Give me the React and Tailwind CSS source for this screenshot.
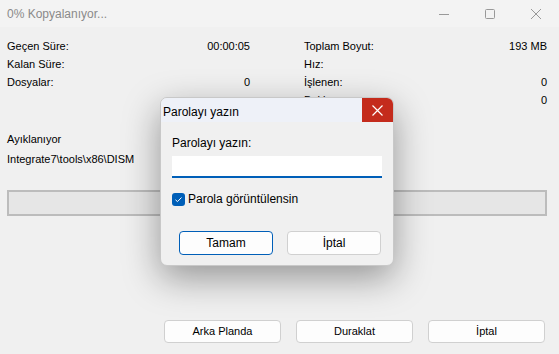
import React from 'react';

const font = { fontFamily: '"Liberation Sans", Arial, sans-serif' };

const Row = ({ label, value }) => (
  <div className="flex justify-between h-[18px] items-center">
    <span>{label}</span>
    <span>{value}</span>
  </div>
);

const WinButton = ({ children, primary }) => (
  <button
    className={
      'h-[24px] rounded-[4px] bg-[#fdfdfd] text-[12px] text-black ' +
      (primary ? 'w-[94px] border border-[#005fb8]' : 'w-[94px] border border-[#d0d0d0]')
    }
  >
    {children}
  </button>
);

const PasswordDialog = () => (
  <div className="absolute left-[160px] top-[97px] w-[234px] h-[169px] rounded-[7px] overflow-hidden bg-[#f0f0f0] border border-[#c8c8c8] shadow-[0_12px_36px_rgba(0,0,0,0.38)] text-[12px]">
    <div className="flex h-[24px] bg-[#eef1f8]">
      <span className="flex-1 pl-[2px] pt-[5px] text-black">Parolayı yazın</span>
      <div className="w-[31px] bg-[#c42b1c] flex items-center justify-center">
        <svg width="11" height="11" viewBox="0 0 11 11" stroke="white" strokeWidth="1.2">
          <path d="M0.5 0.5 L10.5 10.5 M10.5 0.5 L0.5 10.5" />
        </svg>
      </div>
    </div>
    <div className="px-[11px] pt-[14px]">
      <div className="leading-[14px]">Parolayı yazın:</div>
      <div className="mt-[6px] h-[22px] w-[210px] bg-white border-b-2 border-[#005fb8]" />
      <label className="mt-[12px] flex items-center gap-[3px]">
        <span className="w-[13px] h-[13px] rounded-[3px] bg-[#005fb8] flex items-center justify-center">
          <svg width="9" height="9" viewBox="0 0 9 9" fill="none" stroke="white" strokeWidth="1">
            <path d="M1.5 4.8 L3.5 6.6 L7.5 2.5" />
          </svg>
        </span>
        Parola görüntülensin
      </label>
      <div className="mt-[23px] flex gap-[14px] pl-[7px]">
        <WinButton primary>Tamam</WinButton>
        <WinButton>İptal</WinButton>
      </div>
    </div>
  </div>
);

export default function App() {
  return (
    <div className="relative w-[559px] h-[354px] bg-[#f0f0f0] text-[11px] text-black overflow-hidden" style={font}>
      <div className="flex items-center h-[27px] bg-[#f3f3f3] text-[12px]">
        <span className="flex-1 pl-[7px] text-[#8a8a8a]">0% Kopyalanıyor...</span>
        <div className="flex">
          <div className="w-[46px] flex justify-center">
            <svg width="10" height="10" viewBox="0 0 10 10" stroke="#999" strokeWidth="1"><path d="M0 5.5 H10" /></svg>
          </div>
          <div className="w-[46px] flex justify-center">
            <svg width="10" height="10" viewBox="0 0 10 10" fill="none" stroke="#999" strokeWidth="1"><rect x="0.5" y="0.5" width="9" height="9" rx="1" /></svg>
          </div>
          <div className="w-[46px] flex justify-center">
            <svg width="10" height="10" viewBox="0 0 10 10" stroke="#999" strokeWidth="1"><path d="M0 0 L10 10 M10 0 L0 10" /></svg>
          </div>
        </div>
      </div>

      <div className="px-[7px] pt-[10px]">
        <div className="grid grid-cols-[243px_243px] gap-x-[54px] w-[540px]">
          <div>
            <Row label="Geçen Süre:" value="00:00:05" />
            <Row label="Kalan Süre:" value="" />
            <Row label="Dosyalar:" value="0" />
          </div>
          <div>
            <Row label="Toplam Boyut:" value="193 MB" />
            <Row label="Hız:" value="" />
            <Row label="İşlenen:" value="0" />
            <Row label="Bekleyen:" value="0" />
          </div>
        </div>

        <div className="mt-[20px] leading-[20px]">
          <div>Ayıklanıyor</div>
          <div>Integrate7\tools\x86\DISM</div>
        </div>

        <div className="mt-[21px] h-[26px] w-[540px] border-2 border-[#bcbcbc] bg-[#e6e6e6]" />
      </div>

      <div className="absolute bottom-[11px] right-[14px] flex gap-[15px]">
        <button className="w-[117px] h-[23px] rounded-[4px] bg-[#fdfdfd] border border-[#d0d0d0]">Arka Planda</button>
        <button className="w-[117px] h-[23px] rounded-[4px] bg-[#fdfdfd] border border-[#d0d0d0]">Duraklat</button>
        <button className="w-[117px] h-[23px] rounded-[4px] bg-[#fdfdfd] border border-[#d0d0d0]">İptal</button>
      </div>

      <PasswordDialog />
    </div>
  );
}
